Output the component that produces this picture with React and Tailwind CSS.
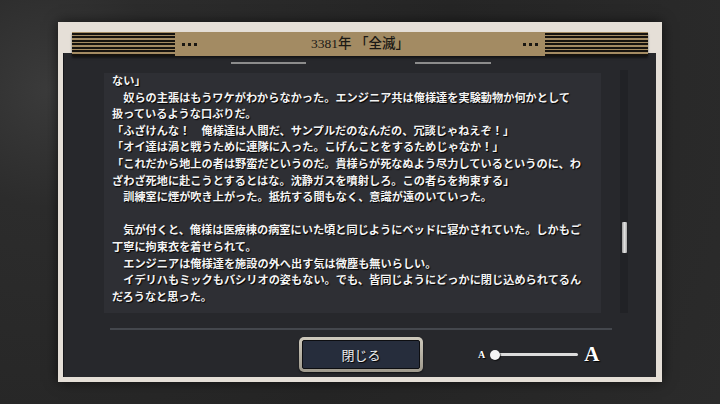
import React from 'react'

const lines = [
  'ない」',
  '　奴らの主張はもうワケがわからなかった。エンジニア共は俺様達を実験動物か何かとして',
  '扱っているような口ぶりだ。',
  '「ふざけんな！　俺様達は人間だ、サンプルだのなんだの、冗談じゃねえぞ！」',
  '「オイ達は渦と戦うために連隊に入った。こげんことをするためじゃなか！」',
  '「これだから地上の者は野蛮だというのだ。貴様らが死なぬよう尽力しているというのに、わ',
  'ざわざ死地に赴こうとするとはな。沈静ガスを噴射しろ。この者らを拘束する」',
  '　訓練室に煙が吹き上がった。抵抗する間もなく、意識が遠のいていった。',
  '',
  '　気が付くと、俺様は医療棟の病室にいた頃と同じようにベッドに寝かされていた。しかもご',
  '丁寧に拘束衣を着せられて。',
  '　エンジニアは俺様達を施設の外へ出す気は微塵も無いらしい。',
  '　イデリハもミックもバシリオの姿もない。でも、皆同じようにどっかに閉じ込められてるん',
  'だろうなと思った。',
]

function Stripes() {
  return (
    <div className="flex flex-col gap-[1.5px] py-[1px] w-[103px]">
      {[0, 1, 2, 3, 4, 5, 6].map((i) => (
        <div key={i} className="h-[2px] bg-[#16130f]" />
      ))}
    </div>
  )
}

function Dots() {
  return (
    <div className="flex gap-[3px]">
      <div className="w-[3px] h-[3px] bg-[#1a1712]" />
      <div className="w-[3px] h-[3px] bg-[#1a1712]" />
      <div className="w-[3px] h-[3px] bg-[#1a1712]" />
    </div>
  )
}

export default function App() {
  return (
    <div className="w-[720px] h-[404px] overflow-hidden bg-[#2a2a2a] bg-[radial-gradient(circle_at_7%_22%,#3b3b3b_0%,#2c2c2c_16%,#252525_55%,#2b2b2b_100%)] pt-[22px] pl-[58px]">
      <div className="w-[604px] h-[360px] bg-[#e5dfd7] pt-[10px] pl-[5px] pr-[6px] pb-[5px] flex flex-col shadow-[0_0_12px_rgba(0,0,0,0.6)]">
        <div className="relative z-10 ml-[9px] mr-[8px] h-[24px] bg-[#a38b63] flex items-center shadow-[0_2px_2px_rgba(0,0,0,0.5)]">
          <Stripes />
          <div className="ml-[7px]"><Dots /></div>
          <div className="flex-1 text-center text-[13.5px] font-medium text-[#1b1915] font-['Liberation_Serif','Noto_Sans_CJK_JP',serif]">
            3381年 「全滅」
          </div>
          <div className="mr-[7px]"><Dots /></div>
          <Stripes />
        </div>
        <div className="-mt-[3px] flex-1 bg-[#27282c] border-l border-[#15161a] flex flex-col">
          <div className="h-[20px] flex pt-[9px] pl-[167px] gap-[109px]">
            <div className="w-[75px] h-[1.5px] bg-[#8c8c8c]" />
            <div className="w-[76px] h-[1.5px] bg-[#8c8c8c]" />
          </div>
          <div className="flex">
            <div className="ml-[40px] w-[497px] h-[240px] bg-[#2e2f34] pl-[8px] overflow-hidden">
              <div className="-mt-[1px] text-[11.2px] leading-[16.6px] text-[#f4f4f4] font-bold font-['Noto_Sans_CJK_JP',sans-serif] [text-shadow:1px_1px_1px_#000]">
                {lines.map((l, i) => (
                  <div key={i} className="whitespace-nowrap h-[16.6px]">{l}</div>
                ))}
              </div>
            </div>
            <div className="ml-[19px] -mt-[3px] w-[8px] h-[243px] bg-[#212226] pt-[152px] flex justify-center">
              <div className="w-[5px] h-[31px] rounded-[1px] bg-[linear-gradient(to_right,#9a9a9a,#e0e0e0,#a8a8a8)]" />
            </div>
          </div>
          <div className="mt-[15px] ml-[46px] w-[502px] h-[2px] bg-[#44474d]" />
          <div className="mt-[7px] flex items-center">
            <div className="ml-[235px] w-[124px] h-[35px] p-[3px] rounded-[5px] bg-[linear-gradient(to_bottom,#cfcabd,#9e998c)] shadow-[0_1px_2px_rgba(0,0,0,0.6)]">
              <div className="w-full h-full rounded-[2px] bg-[#262d3c] border border-[#0d0e11] flex items-center justify-center text-[13px] text-[#eeeeee] font-['Noto_Sans_CJK_JP',sans-serif] [text-shadow:1px_1px_1px_#000]">
                閉じる
              </div>
            </div>
            <div className="ml-[55px] flex items-center">
              <span className="text-[10px] font-bold text-white font-['Liberation_Serif',serif] [text-shadow:1px_1px_1px_#000]">A</span>
              <div className="ml-[5px] relative w-[88px] h-[10px] flex items-center pl-[5px]">
                <div className="w-full h-[3px] rounded-full bg-[#dcdcdc]" />
                <div className="absolute left-0 top-0 w-[10px] h-[10px] rounded-full bg-[#f4f4f4] shadow-[1px_1px_1px_rgba(0,0,0,0.6)]" />
              </div>
              <span className="ml-[6px] text-[21px] leading-none font-bold text-white font-['Liberation_Serif',serif] [text-shadow:1px_1px_1px_#000]">A</span>
            </div>
          </div>
        </div>
      </div>
    </div>
  )
}
